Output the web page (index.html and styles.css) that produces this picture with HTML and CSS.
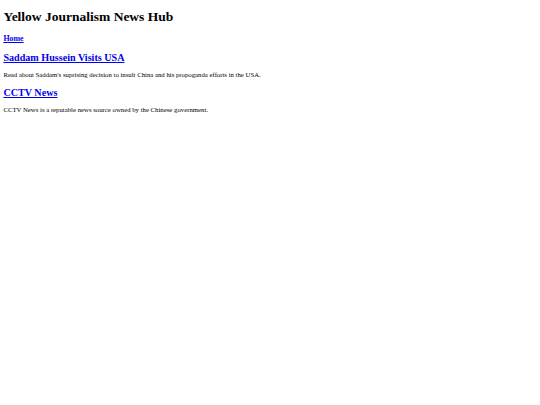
FILE: index.html
```html
<!DOCTYPE html>
<html>
<head>
<meta charset="utf-8">
<title>Yellow Journalism News Hub</title>
<link rel="stylesheet" href="styles.css">
</head>
<body>
<h1 class="title">Yellow Journalism News Hub</h1>
<nav class="nav"><a href="#">Home</a></nav>
<section class="story">
<h2 class="story-title"><a href="#">Saddam Hussein Visits USA</a></h2>
<p class="story-text">Read about Saddam's suprising decision to insult China and his propoganda efforts in the USA.</p>
</section>
<section class="story">
<h2 class="story-title"><a href="#">CCTV News</a></h2>
<p class="story-text">CCTV News is a reputable news source owned by the Chinese government.</p>
</section>
</body>
</html>
```
FILE: styles.css
```css
body {
  margin: 3.375px;
  font-family: "Liberation Serif", "Times New Roman", serif;
  color: #000;
  background: #fff;
}
.title {
  font-size: 13.5px;
  margin: 6px 0 9.05px;
}
.nav {
  font-size: 7.9px;
  font-weight: bold;
  margin: 7.9px 0;
}
a { color: #0000ee; }
.story-title {
  font-size: 10.125px;
  margin: 8.4px 0;
}
.story-text {
  font-size: 6.75px;
  margin: 6.75px 0;
}
```
